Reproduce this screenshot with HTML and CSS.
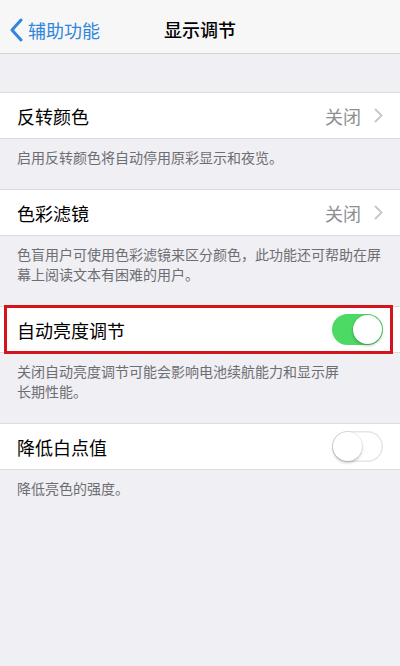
FILE: index.html
```html
<!DOCTYPE html>
<html lang="zh-CN">
<head>
  <meta charset="UTF-8">
  <meta name="viewport" content="width=device-width, initial-scale=1.0">
  <title>显示调节</title>
  <link rel="stylesheet" href="styles.css">
</head>
<body>
  <header class="navbar">
    <a class="back-link" href="#">
      <svg class="back-icon" width="14" height="24" viewBox="0 0 14 24">
        <polyline points="12,2 3,12 12,22" fill="none" stroke="#2f86db" stroke-width="3" stroke-linecap="round" stroke-linejoin="round"/>
      </svg>
      <span>辅助功能</span>
    </a>
    <h1 class="nav-title">显示调节</h1>
  </header>

  <main class="settings">
    <div class="spacer"></div>

    <div class="cell">
      <span class="cell-label">反转颜色</span>
      <span class="cell-value">关闭
        <svg class="chevron" width="9" height="15" viewBox="0 0 9 15">
          <polyline points="1.5,1.5 7.5,7.5 1.5,13.5" fill="none" stroke="#c7c7cc" stroke-width="1.8" stroke-linecap="round" stroke-linejoin="round"/>
        </svg>
      </span>
    </div>
    <p class="cell-note">启用反转颜色将自动停用原彩显示和夜览。</p>

    <div class="cell">
      <span class="cell-label">色彩滤镜</span>
      <span class="cell-value">关闭
        <svg class="chevron" width="9" height="15" viewBox="0 0 9 15">
          <polyline points="1.5,1.5 7.5,7.5 1.5,13.5" fill="none" stroke="#c7c7cc" stroke-width="1.8" stroke-linecap="round" stroke-linejoin="round"/>
        </svg>
      </span>
    </div>
    <p class="cell-note">色盲用户可使用色彩滤镜来区分颜色，此功能还可帮助在屏幕上阅读文本有困难的用户。</p>

    <div class="cell marked">
      <span class="cell-label">自动亮度调节</span>
      <span class="switch on"><span class="knob"></span></span>
    </div>
    <p class="cell-note">关闭自动亮度调节可能会影响电池续航能力和显示屏<br>长期性能。</p>

    <div class="cell">
      <span class="cell-label">降低白点值</span>
      <span class="switch"><span class="knob"></span></span>
    </div>
    <p class="cell-note">降低亮色的强度。</p>
  </main>
</body>
</html>
```

FILE: styles.css
```css
body {
  margin: 0;
  height: 666px;
  overflow: hidden;
  background: #efeff4;
  font-family: "Noto Sans CJK SC", "Noto Sans", sans-serif;
  color: #000;
}

.navbar {
  position: relative;
  box-sizing: border-box;
  height: 54px;
  padding-top: 4px;
  background: #f7f7f8;
  border-bottom: 1px solid #d3d3d6;
  display: flex;
  align-items: center;
  justify-content: center;
}

.back-link {
  position: absolute;
  left: 9px;
  top: 18px;
  display: flex;
  align-items: center;
  gap: 5px;
  color: #2f86db;
  text-decoration: none;
  font-size: 18px;
  line-height: 24px;
}

.nav-title {
  margin: 0;
  font-size: 18px;
  font-weight: 500;
  line-height: 24px;
}

.spacer {
  height: 38px;
}

.cell {
  position: relative;
  height: 45px;
  background: #fff;
  border-top: 1px solid #dcdce0;
  border-bottom: 1px solid #dcdce0;
  display: flex;
  align-items: center;
  justify-content: space-between;
  padding: 0 17px;
}

.cell-label {
  font-size: 18px;
}

.cell-value {
  display: flex;
  align-items: center;
  gap: 13px;
  font-size: 18px;
  color: #8e8e93;
}

.cell.marked::after {
  content: "";
  position: absolute;
  left: 4px;
  right: 7px;
  top: -2px;
  bottom: -2px;
  border: 3px solid #d3141c;
}

.cell-note {
  margin: 0;
  padding: 8px 17px 22px;
  font-size: 14px;
  line-height: 20px;
  color: #6d6d72;
}

.switch {
  position: relative;
  width: 51px;
  height: 31px;
  border-radius: 16px;
  background: #fff;
  box-shadow: inset 0 0 0 1.5px #e5e5ea;
}

.switch .knob {
  position: absolute;
  top: 1px;
  left: 1px;
  width: 29px;
  height: 29px;
  border-radius: 50%;
  background: #fff;
  box-shadow: 0 2px 3px rgba(0, 0, 0, 0.2), 0 0 0 1px rgba(0, 0, 0, 0.06);
}

.switch.on {
  background: #4cd964;
  box-shadow: none;
}

.switch.on .knob {
  left: 21px;
}
```
